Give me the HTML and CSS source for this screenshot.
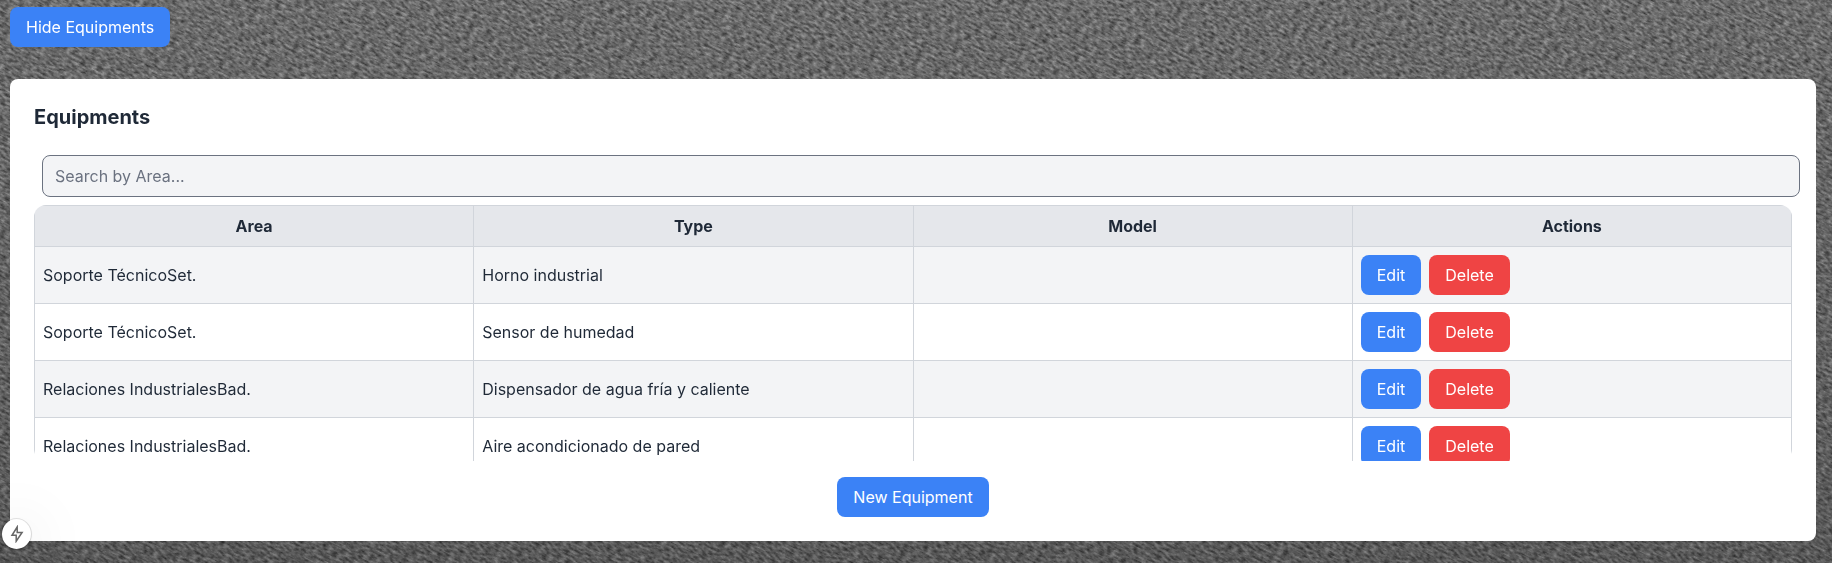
FILE: index.html
```html
<!DOCTYPE html>
<html lang="en">
<head>
<meta charset="utf-8">
<title>Equipments</title>
<link rel="stylesheet" href="styles.css">
</head>
<body>
<svg class="wall" aria-hidden="true">
  <filter id="stone" x="0" y="0" width="100%" height="100%" color-interpolation-filters="sRGB">
    <feTurbulence type="fractalNoise" baseFrequency="0.17 0.42" numOctaves="5" seed="21"/>
    <feColorMatrix values="0 0 0 0.58 0.13  0 0 0 0.58 0.13  0 0 0 0.58 0.13  0 0 0 0 1"/>
  </filter>
  <linearGradient id="shade" x1="0" y1="0" x2="0" y2="1">
    <stop offset="0" stop-color="#000" stop-opacity="0"/>
    <stop offset="1" stop-color="#000" stop-opacity="0.18"/>
  </linearGradient>
  <g transform="rotate(27)"><rect x="-100" y="-950" width="2200" height="1600" filter="url(#stone)"/></g>
  <rect width="100%" height="100%" fill="url(#shade)"/>
</svg>
<main class="page">
  <button class="btn">Hide Equipments</button>
  <section class="panel">
    <h2 class="title">Equipments</h2>
    <div class="search-row"><input class="search" type="text" placeholder="Search by Area..."></div>
    <div class="table-box">
      <table class="table">
        <thead><tr><th>Area</th><th>Type</th><th>Model</th><th>Actions</th></tr></thead>
        <tbody>
          <tr><td>Soporte TécnicoSet.</td><td>Horno industrial</td><td></td><td><div class="actions"><button class="btn">Edit</button><button class="btn danger">Delete</button></div></td></tr>
          <tr><td>Soporte TécnicoSet.</td><td>Sensor de humedad</td><td></td><td><div class="actions"><button class="btn">Edit</button><button class="btn danger">Delete</button></div></td></tr>
          <tr><td>Relaciones IndustrialesBad.</td><td>Dispensador de agua fría y caliente</td><td></td><td><div class="actions"><button class="btn">Edit</button><button class="btn danger">Delete</button></div></td></tr>
          <tr><td>Relaciones IndustrialesBad.</td><td>Aire acondicionado de pared</td><td></td><td><div class="actions"><button class="btn">Edit</button><button class="btn danger">Delete</button></div></td></tr>
        </tbody>
      </table>
    </div>
    <div class="footer"><button class="btn">New Equipment</button></div>
  </section>
</main>
<div class="dev-badge">
  <svg width="14" height="18" viewBox="0 0 14 18" fill="none" stroke="#666" stroke-width="1.5" stroke-linejoin="miter"><path d="M7.2 2 2 10.3H6.2V16.2L12.1 7.4H7.2Z"/></svg>
</div>
</body>
</html>
```
FILE: styles.css
```css
* { box-sizing: border-box; }
body {
  margin: 0;
  height: 563px;
  overflow: hidden;
  background: #666;
  color: #1f2937;
  font: 16px/24px Inter, sans-serif;
}
.wall { position: fixed; inset: 0; z-index: -1; width: 100%; height: 100%; }
.page { padding: 7px 16px 0 10px; }
.btn {
  display: block;
  height: 40px;
  padding: 8px 16px;
  border: 0;
  border-radius: 8px;
  background: #3b82f6;
  color: #fff;
  font: inherit;
}
.danger { background: #ef4444; }
.panel {
  margin-top: 32px;
  padding: 24px;
  border-radius: 8px;
  background: #fff;
}
.title { margin: 0 0 16px; font-size: 20px; line-height: 28px; font-weight: 700; }
.search-row { padding: 8px 0; }
.search {
  display: block;
  width: 100%;
  height: 42px;
  margin-left: 8px;
  padding: 8px 12px;
  border: 1px solid #6b7280;
  border-radius: 8px;
  background: #f3f4f6;
  color: inherit;
  font: inherit;
}
.search::placeholder { color: #6b7280; }
.table-box { height: 256px; overflow: hidden; border-radius: 12px; }
.table { width: 100%; table-layout: fixed; border-collapse: collapse; }
.table th, .table td { padding: 8px; border: 1px solid #d1d5db; text-align: left; }
.table th { background: #e5e7eb; font-weight: 700; text-align: center; }
.table tbody tr { background: #fff; }
.table tbody tr:nth-child(odd) { background: #f3f4f6; }
.actions { display: flex; gap: 8px; }
.footer { display: flex; justify-content: center; margin-top: 16px; }
.dev-badge {
  position: fixed;
  left: 2px;
  bottom: 14px;
  display: flex;
  align-items: center;
  justify-content: center;
  width: 29px;
  height: 30px;
  border-radius: 50%;
  background: #fff;
  box-shadow: 0 0 0 1px rgba(0,0,0,.1), 0 1px 3px rgba(0,0,0,.12), 0 8px 60px rgba(0,0,0,.18);
}
```
